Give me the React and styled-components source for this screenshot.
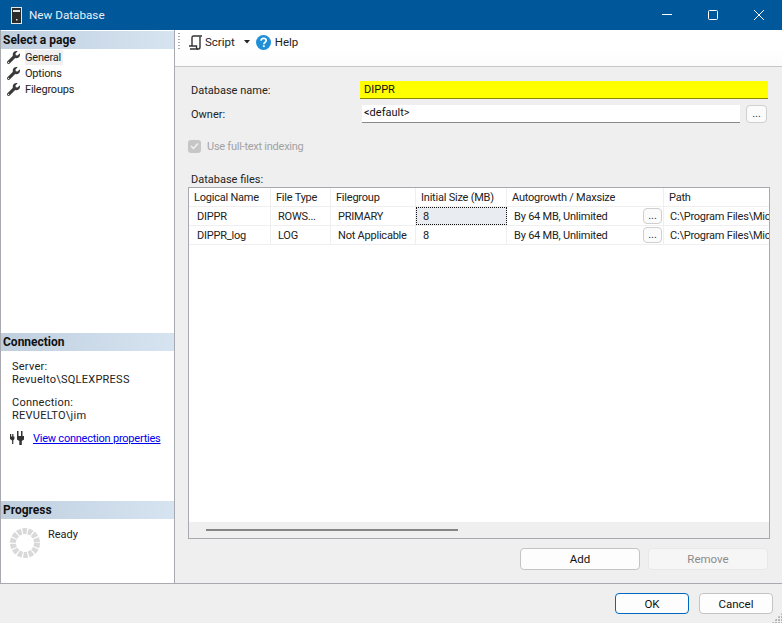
import React from 'react';
import styled, { createGlobalStyle } from 'styled-components';
import { FaWrench } from 'react-icons/fa';

const Global = createGlobalStyle`
  html, body { margin: 0; padding: 0; background: #efefef; }
  body { font-family: Roboto, "Liberation Sans", sans-serif; font-size: 11px; color: #111; }
  * { box-sizing: border-box; }
`;

const Dialog = styled.div`
  position: relative;
  width: 782px;
  height: 623px;
  display: flex;
  flex-direction: column;
  overflow: hidden;
  background: #efefef;
`;

const TitleBar = styled.div`
  height: 30px;
  flex: none;
  background: #00589b;
  color: #e8f0f7;
  display: flex;
  align-items: center;
  padding-left: 11px;
  font-size: 11.7px;
`;

const TitleText = styled.span`
  margin-left: 7px;
  flex: 1;
`;

const WinButton = styled.div`
  width: 46px;
  height: 30px;
  display: flex;
  align-items: center;
  justify-content: center;
`;

const Body = styled.div`
  height: 554px;
  flex: none;
  display: flex;
  border-bottom: 1px solid #a9a9b0;
  border-left: 1px solid #a9a9b0;
`;

const Side = styled.div`
  width: 174px;
  flex: none;
  background: #fff;
  border-right: 1px solid #a9a9b0;
  display: flex;
  flex-direction: column;
`;

const SideSection = styled.div`
  height: ${(p) => p.$h}px;
  flex: none;
  padding-top: ${(p) => p.$top || 0}px;
`;

const SideHead = styled.div`
  height: 18px;
  background: linear-gradient(90deg, #c0cfde, #d6e4f2);
  font-weight: 700;
  font-size: 12px;
  line-height: 18px;
  padding-left: 2px;
  color: #111;
`;

const PageList = styled.div`
  display: flex;
  flex-direction: column;
  padding: 0 0 0 6px;
`;

const PageRow = styled.div`
  height: 16px;
  display: flex;
  align-items: center;
  gap: 5px;
  color: #222;
  letter-spacing: -0.2px;
  span {
    padding: 0 2px 0 0;
    background: ${(p) => (p.$active ? '#f0f0f0' : 'transparent')};
    line-height: 15px;
  }
`;

const ConnBlock = styled.div`
  padding: 9px 0 0 11px;
  line-height: 13px;
  color: #222;
  letter-spacing: 0.25px;
  & + & { padding-top: 10px; }
`;

const ConnLink = styled.div`
  display: flex;
  align-items: center;
  gap: 8px;
  margin: 9px 0 0 9px;
  a {
    color: #0000ee;
    text-decoration: underline;
    white-space: nowrap;
    letter-spacing: -0.23px;
  }
`;

const ProgressRow = styled.div`
  display: flex;
  padding: 9px 0 0 9px;
  gap: 8px;
  color: #222;
`;

const Main = styled.div`
  flex: 1;
  display: flex;
  flex-direction: column;
  min-width: 0;
`;

const Toolbar = styled.div`
  height: 37px;
  flex: none;
  background: linear-gradient(#fff 0, #fff 20px, #fbfbfb);
  border-bottom: 1px solid #c6c6c6;
  display: flex;
  align-items: flex-start;
  padding: 3px 0 0 3px;
  color: #222;
`;

const Gripper = styled.div`
  width: 2px;
  height: 16px;
  margin-right: 8px;
  background: repeating-linear-gradient(#aaa 0 1px, transparent 1px 3px);
`;

const ToolItem = styled.div`
  display: flex;
  align-items: center;
  height: 18px;
  gap: ${(p) => p.$gap || 2}px;
  margin-right: ${(p) => p.$mr || 0}px;
  font-size: 11.5px;
`;

const Form = styled.div`
  flex: 1;
  padding: 14px 13px 0 13px;
  display: flex;
  flex-direction: column;
`;

const FieldRow = styled.div`
  display: flex;
  align-items: center;
  height: 18px;
  margin-bottom: ${(p) => p.$mb || 0}px;
`;

const FieldLabel = styled.div`
  width: ${(p) => p.$w}px;
  padding-left: 3px;
  flex: none;
  color: #222;
`;

const NameInput = styled.div`
  flex: 1;
  height: 18px;
  background: #ff0;
  border-bottom: 1px solid #8a8a00;
  padding-left: 4px;
  line-height: 17px;
  margin-right: 1px;
`;

const OwnerInput = styled.div`
  width: 378px;
  height: 18px;
  background: #fff;
  border-bottom: 1px solid #8a8a8a;
  padding-left: 2px;
  line-height: 16px;
`;

const SmallButton = styled.div`
  width: ${(p) => p.$w || 21}px;
  height: ${(p) => p.$h || 18}px;
  flex: none;
  background: #fbfbfb;
  border: 1px solid #cfcfcf;
  border-radius: 4px;
  text-align: center;
  line-height: ${(p) => (p.$h || 18) - 2}px;
  font-size: 11px;
  letter-spacing: 0;
  margin-left: ${(p) => p.$ml || 0}px;
  margin-right: ${(p) => p.$mr || 0}px;
  color: #333;
`;

const CheckRow = styled.div`
  display: flex;
  align-items: center;
  gap: 6px;
  height: 14px;
  margin: 16px 0 19px 0;
  color: #a2a2a2;
  letter-spacing: -0.25px;
`;

const CheckBox = styled.div`
  width: 13px;
  height: 13px;
  border-radius: 3px;
  background: #c6c6c6;
  display: flex;
  align-items: center;
  justify-content: center;
`;

const FilesLabel = styled.div`
  height: 15px;
  padding-left: 3px;
  line-height: 15px;
  color: #222;
`;

const Grid = styled.div`
  width: 582px;
  height: 352px;
  border: 1px solid #a9a9b0;
  background: #fff;
  display: flex;
  flex-direction: column;
  overflow: hidden;
`;

const GridRows = styled.div`
  flex: 1;
`;

const Row = styled.div`
  display: grid;
  grid-template-columns: 82px 60px 85px 91px 157px 105px;
  height: 19px;
  border-bottom: 1px solid #efefef;
  letter-spacing: -0.22px;
`;

const Cell = styled.div`
  border-right: 1px solid #efefef;
  padding-left: ${(p) => p.$pl}px;
  line-height: 19px;
  white-space: nowrap;
  overflow: hidden;
  color: #222;
  display: flex;
  align-items: ${(p) => (p.$btn ? 'center' : 'stretch')};
  justify-content: ${(p) => (p.$btn ? 'space-between' : 'flex-start')};
  ${(p) => p.$focus && `
    background: #e9edf1;
    outline: 1px dotted #111;
    outline-offset: -1px;
  `}
  &:last-child { border-right: none; }
`;

const ScrollTrack = styled.div`
  height: 16px;
  flex: none;
  background: #efefef;
  padding: 7px 0 0 17px;
`;

const ScrollThumb = styled.div`
  width: 252px;
  height: 2px;
  background: #858585;
`;

const GridActions = styled.div`
  display: flex;
  justify-content: flex-end;
  gap: 8px;
  margin-top: 9px;
  width: 580px;
`;

const Button = styled.div`
  width: ${(p) => p.$w}px;
  height: ${(p) => p.$h}px;
  flex: none;
  background: ${(p) => (p.$disabled ? '#f6f6f6' : '#fdfdfd')};
  border: 1px solid ${(p) => (p.$primary ? '#0067c0' : p.$disabled ? '#e8e8e8' : '#c4c4c4')};
  border-radius: 4px;
  color: ${(p) => (p.$disabled ? '#8c8c8c' : '#111')};
  display: flex;
  align-items: center;
  justify-content: center;
  font-size: 11.5px;
`;

const Footer = styled.div`
  flex: 1;
  display: flex;
  justify-content: flex-end;
  gap: 10px;
  padding: 9px 9px 0 0;
`;

const Grip = styled.div`
  position: absolute;
  right: 0;
  bottom: 0;
  width: 10px;
  height: 10px;
  background: radial-gradient(circle at 1px 1px, #b5b5b5 1px, transparent 1px) 0 0 / 3px 3px;
  clip-path: polygon(100% 0, 100% 100%, 0 100%);
`;

const Wrench = styled(FaWrench)`
  width: 13px;
  height: 13px;
  color: #3a3a3a;
  flex: none;
`;

const ServerIcon = () => (
  <svg width="11" height="17" viewBox="0 0 11 17">
    <rect x="0.5" y="0.5" width="10" height="16" fill="#2b2b2b" stroke="#e6e6e6" />
    <rect x="2" y="3" width="7" height="2" fill="#e6e6e6" />
    <rect x="5" y="12" width="1.5" height="1.5" fill="#e6e6e6" />
  </svg>
);

const ScriptIcon = () => (
  <svg width="15" height="15" viewBox="0 0 15 15" fill="none" stroke="#333" strokeWidth="1.4">
    <path d="M4 11V2.5C4 1.5 4.5 1 5.5 1H14" />
    <path d="M12 1.5V12C12 13.2 11.5 14 10.5 14H2" />
    <path d="M1 11H8.5V12.5C8.5 13.5 9.2 14 10 14" />
  </svg>
);

const HelpIcon = () => (
  <svg width="15" height="15" viewBox="0 0 15 15">
    <circle cx="7.5" cy="7.5" r="7.5" fill="#1f8fd8" />
    <path d="M5 5.6C5.2 4.2 6.2 3.4 7.6 3.4C9.1 3.4 10.2 4.3 10.2 5.6C10.2 7.4 7.8 7.4 7.8 9.2" fill="none" stroke="#fff" strokeWidth="1.7" />
    <rect x="6.9" y="10.3" width="1.8" height="1.8" fill="#fff" />
  </svg>
);

const PlugIcon = () => (
  <svg width="15" height="14" viewBox="0 0 15 14" fill="#333">
    <path d="M0 3h1.200v2.500h1V3h1.200v2.500h1V8L3.300 9.500V13H2.100V9.500L0 8z" />
    <path d="M7 5V0h1.500v5h2.500V0h1.500v5H14v3.500l-2.200 1.500V14H9.300V10L7 8.500z" />
  </svg>
);

const Spinner = () => (
  <svg width="30" height="30" viewBox="0 0 30 30">
    <circle cx="15" cy="15" r="12" fill="none" stroke="#d9d9d9" strokeWidth="6" strokeDasharray="4.200 1.186" />
  </svg>
);

const columns = ['Logical Name', 'File Type', 'Filegroup', 'Initial Size (MB)', 'Autogrowth / Maxsize', 'Path'];
const files = [
  { name: 'DIPPR', type: 'ROWS...', group: 'PRIMARY', focus: true },
  { name: 'DIPPR_log', type: 'LOG', group: 'Not Applicable' },
];
const pages = ['General', 'Options', 'Filegroups'];

export default function App() {
  return (
    <Dialog>
      <Global />
      <TitleBar>
        <ServerIcon />
        <TitleText>New Database</TitleText>
        <WinButton>
          <svg width="10" height="10"><rect y="4" width="10" height="1" fill="#fff" /></svg>
        </WinButton>
        <WinButton>
          <svg width="10" height="10"><rect x="0.5" y="0.5" width="9" height="9" rx="1" fill="none" stroke="#fff" /></svg>
        </WinButton>
        <WinButton>
          <svg width="10" height="10"><path d="M0 0L10 10M10 0L0 10" stroke="#fff" /></svg>
        </WinButton>
      </TitleBar>
      <Body>
        <Side>
          <SideSection $h={303} $top={1}>
            <SideHead>Select a page</SideHead>
            <PageList>
              {pages.map((p, i) => (
                <PageRow key={p} $active={i === 0}>
                  <Wrench />
                  <span>{p}</span>
                </PageRow>
              ))}
            </PageList>
          </SideSection>
          <SideSection $h={168}>
            <SideHead>Connection</SideHead>
            <ConnBlock>Server:<br />Revuelto\SQLEXPRESS</ConnBlock>
            <ConnBlock>Connection:<br />REVUELTO\jim</ConnBlock>
            <ConnLink>
              <PlugIcon />
              <a href="#">View connection properties</a>
            </ConnLink>
          </SideSection>
          <SideSection $h={82}>
            <SideHead>Progress</SideHead>
            <ProgressRow>
              <Spinner />
              <span>Ready</span>
            </ProgressRow>
          </SideSection>
        </Side>
        <Main>
          <Toolbar>
            <Gripper />
            <ToolItem $mr={6}>
              <ScriptIcon />
              <span>Script</span>
              <svg width="6" height="4" style={{ marginLeft: 7 }}><path d="M0 0h6L3 3.500z" fill="#222" /></svg>
            </ToolItem>
            <ToolItem $gap={4}>
              <HelpIcon />
              <span>Help</span>
            </ToolItem>
          </Toolbar>
          <Form>
            <FieldRow $mb={6}>
              <FieldLabel $w={172}>Database name:</FieldLabel>
              <NameInput>DIPPR</NameInput>
            </FieldRow>
            <FieldRow>
              <FieldLabel $w={174}>Owner:</FieldLabel>
              <OwnerInput>&lt;default&gt;</OwnerInput>
              <SmallButton $ml={6}>...</SmallButton>
            </FieldRow>
            <CheckRow>
              <CheckBox>
                <svg width="9" height="8" viewBox="0 0 9 8"><path d="M1 4l2.500 2.500L8 1.500" fill="none" stroke="#f4f4f4" strokeWidth="1.300" /></svg>
              </CheckBox>
              <span>Use full-text indexing</span>
            </CheckRow>
            <FilesLabel>Database files:</FilesLabel>
            <Grid>
              <GridRows>
                <Row>
                  {columns.map((c) => (
                    <Cell key={c} $pl={5}>{c}</Cell>
                  ))}
                </Row>
                {files.map((f) => (
                  <Row key={f.name}>
                    <Cell $pl={8}>{f.name}</Cell>
                    <Cell $pl={7}>{f.type}</Cell>
                    <Cell $pl={7}>{f.group}</Cell>
                    <Cell $pl={7} $focus={f.focus}>8</Cell>
                    <Cell $pl={7} $btn>
                      <span>By 64 MB, Unlimited</span>
                      <SmallButton $w={19} $h={16} $mr={1}>...</SmallButton>
                    </Cell>
                    <Cell $pl={6}>C:\Program Files\Mic</Cell>
                  </Row>
                ))}
              </GridRows>
              <ScrollTrack>
                <ScrollThumb />
              </ScrollTrack>
            </Grid>
            <GridActions>
              <Button $w={120} $h={22}>Add</Button>
              <Button $w={120} $h={22} $disabled>Remove</Button>
            </GridActions>
          </Form>
        </Main>
      </Body>
      <Footer>
        <Button $w={74} $h={21} $primary>OK</Button>
        <Button $w={74} $h={21}>Cancel</Button>
      </Footer>
      <Grip />
    </Dialog>
  );
}
